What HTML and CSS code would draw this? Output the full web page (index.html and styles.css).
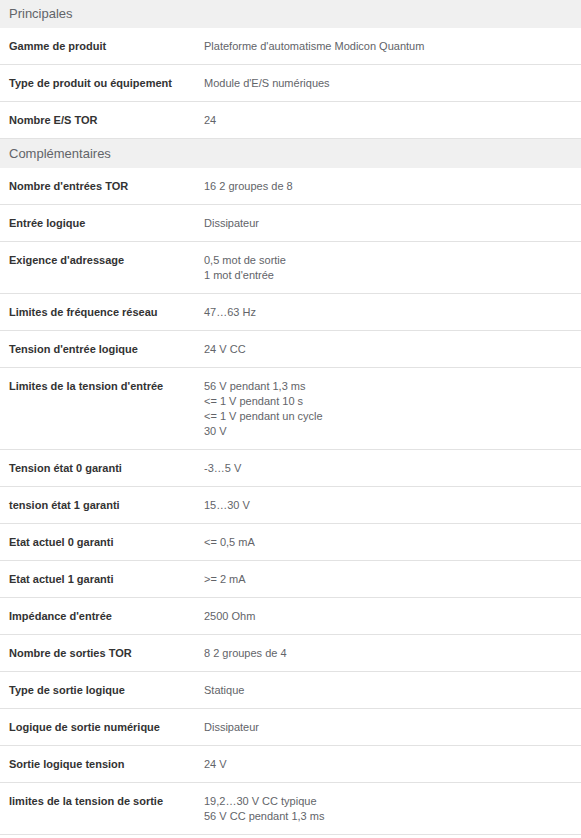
FILE: index.html
```html
<!DOCTYPE html>
<html lang="fr">
<head>
<meta charset="utf-8">
<link rel="stylesheet" href="styles.css">
</head>
<body>
<div class="specs">
  <div class="section">Principales</div>
  <div class="row"><div class="label">Gamme de produit</div><div class="value">Plateforme d'automatisme Modicon Quantum</div></div>
  <div class="row"><div class="label">Type de produit ou équipement</div><div class="value">Module d'E/S numériques</div></div>
  <div class="row"><div class="label">Nombre E/S TOR</div><div class="value">24</div></div>
  <div class="section">Complémentaires</div>
  <div class="row"><div class="label">Nombre d'entrées TOR</div><div class="value">16 2 groupes de 8</div></div>
  <div class="row"><div class="label">Entrée logique</div><div class="value">Dissipateur</div></div>
  <div class="row"><div class="label">Exigence d'adressage</div><div class="value">0,5 mot de sortie<br>1 mot d'entrée</div></div>
  <div class="row"><div class="label">Limites de fréquence réseau</div><div class="value">47…63 Hz</div></div>
  <div class="row"><div class="label">Tension d'entrée logique</div><div class="value">24 V CC</div></div>
  <div class="row"><div class="label">Limites de la tension d'entrée</div><div class="value">56 V pendant 1,3 ms<br>&lt;= 1 V pendant 10 s<br>&lt;= 1 V pendant un cycle<br>30 V</div></div>
  <div class="row"><div class="label">Tension état 0 garanti</div><div class="value">-3…5 V</div></div>
  <div class="row"><div class="label">tension état 1 garanti</div><div class="value">15…30 V</div></div>
  <div class="row"><div class="label">Etat actuel 0 garanti</div><div class="value">&lt;= 0,5 mA</div></div>
  <div class="row"><div class="label">Etat actuel 1 garanti</div><div class="value">&gt;= 2 mA</div></div>
  <div class="row"><div class="label">Impédance d'entrée</div><div class="value">2500 Ohm</div></div>
  <div class="row"><div class="label">Nombre de sorties TOR</div><div class="value">8 2 groupes de 4</div></div>
  <div class="row"><div class="label">Type de sortie logique</div><div class="value">Statique</div></div>
  <div class="row"><div class="label">Logique de sortie numérique</div><div class="value">Dissipateur</div></div>
  <div class="row"><div class="label">Sortie logique tension</div><div class="value">24 V</div></div>
  <div class="row"><div class="label">limites de la tension de sortie</div><div class="value">19,2…30 V CC typique<br>56 V CC pendant 1,3 ms</div></div>
</div>
</body>
</html>
```

FILE: styles.css
```css
html, body {
  margin: 0;
  padding: 0;
  background: #ffffff;
}
body {
  font-family: "Liberation Sans", Arial, sans-serif;
}
.specs {
  width: 581px;
}
.section {
  background: #f0f0f0;
  color: #626469;
  font-size: 13px;
  line-height: 18px;
  padding: 6px 9px 5px 9px;
}
.section:first-child {
  padding-top: 5px;
}
.row {
  display: grid;
  grid-template-columns: 195px 1fr;
  padding: 11px 9px 10px 9px;
  border-bottom: 1px solid #e2e2e2;
  font-size: 11px;
  line-height: 15px;
}
.label {
  font-weight: bold;
  color: #333333;
}
.value {
  color: #626469;
}
```
